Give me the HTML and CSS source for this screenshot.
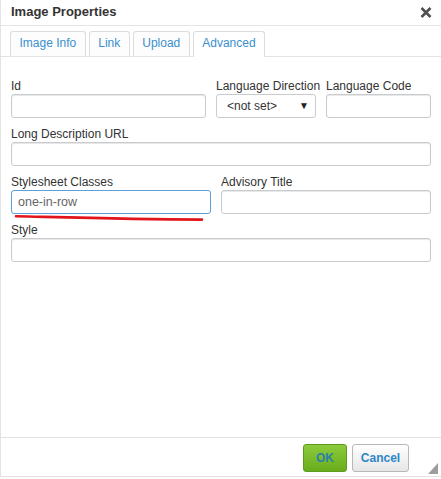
FILE: index.html
```html
<!DOCTYPE html>
<html>
<head>
<meta charset="utf-8">
<title>Image Properties</title>
<link rel="stylesheet" href="styles.css">
</head>
<body>
<div class="dialog">
  <div class="titlebar">
    <span class="title">Image Properties</span>
    <span class="close" title="Close">
      <svg width="12" height="11" viewBox="0 0 12 11"><path d="M1.5 1 L10.5 10 M10.5 1 L1.5 10" stroke="#505050" stroke-width="2.6" stroke-linecap="butt"/></svg>
    </span>
  </div>
  <div class="tabs">
    <span class="tab">Image Info</span>
    <span class="tab">Link</span>
    <span class="tab">Upload</span>
    <span class="tab active">Advanced</span>
  </div>
  <div class="content">
    <div class="row row-three">
      <div class="field"><label class="lbl">Id</label><div class="input"></div></div>
      <div class="field"><label class="lbl">Language Direction</label><div class="input select"><span>&lt;not set&gt;</span><span class="arrow">&#9660;</span></div></div>
      <div class="field"><label class="lbl">Language Code</label><div class="input"></div></div>
    </div>
    <div class="row">
      <div class="field"><label class="lbl">Long Description URL</label><div class="input"></div></div>
    </div>
    <div class="row row-two">
      <div class="field"><label class="lbl">Stylesheet Classes</label><div class="input focus">one-in-row</div></div>
      <div class="field"><label class="lbl">Advisory Title</label><div class="input"></div></div>
      <svg class="mark" width="200" height="10" viewBox="0 0 200 10"><path d="M4 3.2 C 60 4.5, 120 6.2, 190 6.6" stroke="#e2151b" stroke-width="2.6" fill="none" stroke-linecap="round"/></svg>
    </div>
    <div class="row">
      <div class="field"><label class="lbl">Style</label><div class="input"></div></div>
    </div>
  </div>
  <div class="footer">
    <span class="btn ok">OK</span>
    <span class="btn cancel">Cancel</span>
    <span class="grip"></span>
  </div>
</div>
</body>
</html>
```
FILE: styles.css
```css
* { box-sizing: border-box; }
html, body { margin: 0; padding: 0; background: #fff; }
body {
  font-family: "Liberation Sans", Arial, sans-serif;
  font-size: 12px;
  color: #333;
}
.dialog {
  height: 477px;
  border-left: 1px solid #e3e3e3;
  border-bottom: 1px solid #e3e3e3;
  display: flex;
  flex-direction: column;
}
.titlebar {
  height: 26px;
  border-bottom: 1px solid #e5e5e5;
  display: flex;
  justify-content: space-between;
  align-items: flex-start;
  padding: 0 9px 0 10px;
}
.title {
  font-size: 13px;
  font-weight: bold;
  color: #333;
  line-height: 23px;
}
.close {
  display: flex;
  margin-top: 7px;
}
.tabs {
  display: flex;
  gap: 3px;
  padding: 5px 0 0 9px;
  border-bottom: 1px solid #e3e3e3;
  height: 31px;
}
.tab {
  height: 25px;
  line-height: 23px;
  padding: 0 8.5px;
  border: 1px solid #dcdcdc;
  border-bottom: none;
  border-radius: 3px 3px 0 0;
  color: #3a8fcd;
  background: #fdfdfd;
}
.tab.active {
  background: #fff;
  height: 26px;
  margin-bottom: -1px;
}
.content {
  flex: 1;
  padding: 22px 10px 0 10px;
  display: flex;
  flex-direction: column;
  gap: 9px;
}
.row { display: grid; grid-template-columns: 1fr; }
.row-three { grid-template-columns: 195px 100px 105px; column-gap: 10px; }
.row-two { grid-template-columns: 200px 1fr; column-gap: 10px; position: relative; }
.field { display: flex; flex-direction: column; min-width: 0; }
.lbl {
  line-height: 15px;
  white-space: nowrap;
  color: #333;
}
.input {
  height: 24px;
  border: 1px solid #c9cccf;
  border-radius: 3px;
  background: #fff;
  box-shadow: inset 0 1px 1px rgba(0,0,0,0.10);
  padding: 0 6px;
  line-height: 22px;
  color: #666;
}
.input.focus {
  border-color: #5d9fd7;
  box-shadow: none;
  font-size: 12.5px;
}
.input.select {
  display: flex;
  justify-content: space-between;
  padding: 0 6px 0 10px;
  color: #333;
  box-shadow: none;
}
.arrow { font-size: 10px; color: #222; }
.mark {
  position: absolute;
  left: 1px;
  top: 38px;
}
.footer {
  height: 39px;
  border-top: 1px solid #e3e3e3;
  display: flex;
  justify-content: flex-end;
  align-items: flex-start;
  padding: 6px 3px 0 0;
  gap: 5px;
}
.btn {
  height: 28px;
  line-height: 26px;
  border-radius: 3px;
  font-weight: bold;
  font-size: 12px;
  text-align: center;
}
.ok {
  width: 44px;
  border: 1px solid #5d9a1f;
  background: linear-gradient(#8ccb3c, #68ac1c);
  color: #2a80a8;
}
.cancel {
  width: 57px;
  border: 1px solid #b8b8b8;
  background: linear-gradient(#ffffff, #e6e6e6);
  color: #2f87c7;
}
.grip {
  margin-left: 14px;
  margin-top: 19px;
  width: 0;
  height: 0;
  border-left: 10px solid transparent;
  border-bottom: 11px solid #9d9d9d;
}
```
